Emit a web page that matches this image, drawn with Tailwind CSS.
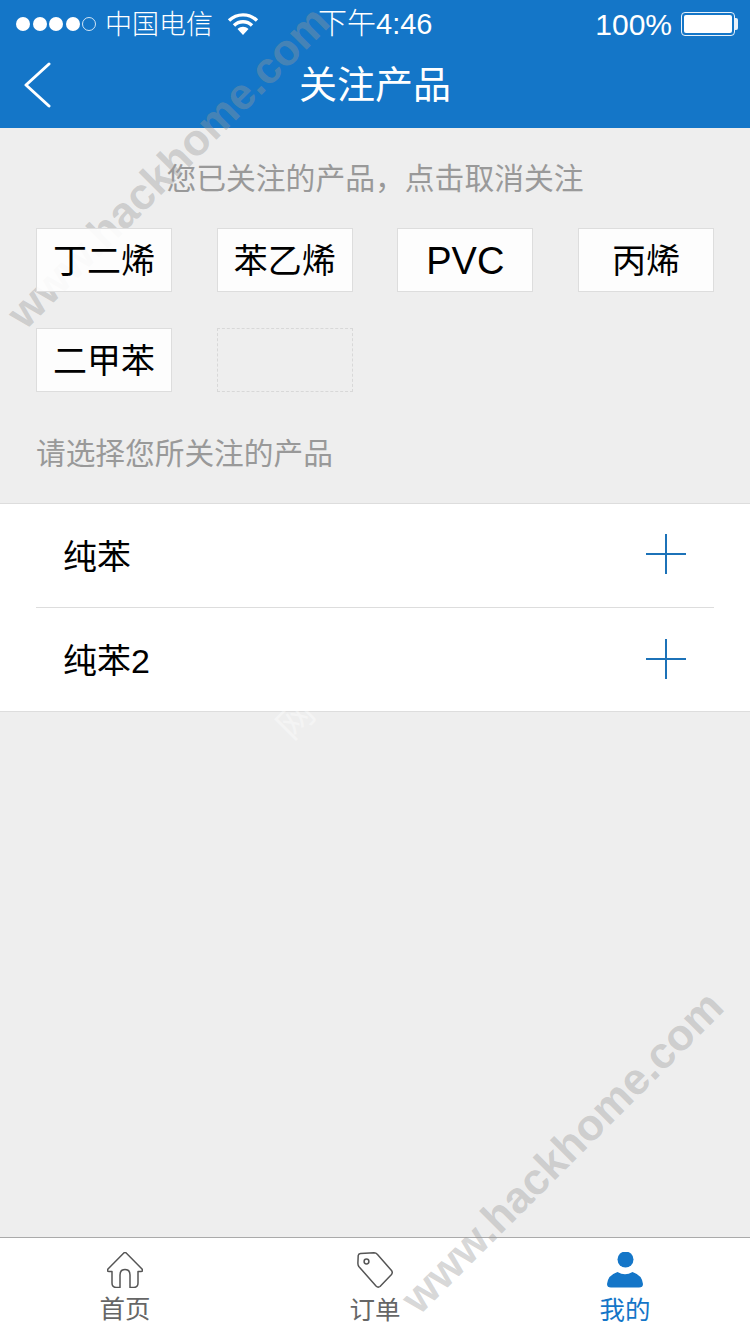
<!DOCTYPE html>
<html lang="zh-CN">
<head>
    <meta charset="UTF-8">
    <meta name="viewport" content="width=device-width, initial-scale=1.0">
    <title>关注产品</title>
    <script src="https://cdn.jsdelivr.net/npm/@tailwindcss/browser@4"></script>
</head>
<body class="bg-[#eeeeee]">
    <div class="relative w-[750px] h-[1334px] overflow-hidden flex flex-col bg-[#eeeeee] font-['Liberation_Sans','Noto_Sans_CJK_SC',sans-serif]">

        <!-- header -->
        <header class="bg-[#1476c8] text-white h-[128px] shrink-0">
            <div class="h-[48px] flex items-center pl-[16px] pr-[12px] font-light">
                <div class="flex items-center gap-[2.5px] w-[81px]">
                    <span class="w-[14px] h-[14px] rounded-full bg-white"></span>
                    <span class="w-[14px] h-[14px] rounded-full bg-white"></span>
                    <span class="w-[14px] h-[14px] rounded-full bg-white"></span>
                    <span class="w-[14px] h-[14px] rounded-full bg-white"></span>
                    <span class="w-[14px] h-[14px] rounded-full border border-white/80"></span>
                </div>
                <span class="ml-[8px] pt-[2px] text-[27px] whitespace-nowrap">中国电信</span>
                <svg class="ml-[14px]" width="32" height="24" viewBox="0 0 32 24" fill="none" stroke="#fff" stroke-width="3.4">
                    <path d="M2 8.5 C10 1 22 1 30 8.5"/>
                    <path d="M7 13.5 C12 8.5 20 8.5 25 13.5"/>
                    <path d="M10.5 17 L16 23 L21.5 17 C18 14 14 14 10.5 17 Z" fill="#fff" stroke="none"/>
                </svg>
                <span class="ml-[59px] pt-[2px] text-[29px] whitespace-nowrap">下午4:46</span>
                <span class="ml-auto text-[30px] whitespace-nowrap">100%</span>
                <div class="ml-[9px] flex items-center">
                    <div class="w-[54px] h-[24px] rounded-[4px] border border-white/90 p-[2px]">
                        <div class="w-full h-full bg-white rounded-[2px]"></div>
                    </div>
                    <div class="w-[3px] h-[12px] bg-white/90 rounded-r-[2px]"></div>
                </div>
            </div>
            <div class="relative h-[80px] flex items-center justify-center pb-[7px]">
                <svg class="absolute left-[23px] top-[14px]" width="28" height="46" viewBox="0 0 28 46" fill="none" stroke="#fff" stroke-width="3" stroke-linecap="round" stroke-linejoin="round">
                    <path d="M26 2 L3 23 L26 44"/>
                </svg>
                <h1 class="text-[38px] leading-none font-normal">关注产品</h1>
            </div>
        </header>

        <!-- followed products -->
        <section class="relative z-10 shrink-0 h-[375px] px-[36px]">
            <p class="h-[100px] pt-[34px] text-center text-[29.8px] leading-[34px] text-[#999999]">您已关注的产品，点击取消关注</p>
            <div class="grid grid-cols-[repeat(4,136px)] justify-between gap-y-[36px]">
                <div class="h-[64px] pt-[2px] flex items-center justify-center bg-white/90 border border-[#dddddd] text-[34px] text-black">丁二烯</div>
                <div class="h-[64px] pt-[2px] flex items-center justify-center bg-white/90 border border-[#dddddd] text-[34px] text-black">苯乙烯</div>
                <div class="h-[64px] pt-[2px] flex items-center justify-center bg-white/90 border border-[#dddddd] text-[38px] text-black">PVC</div>
                <div class="h-[64px] pt-[2px] flex items-center justify-center bg-white/90 border border-[#dddddd] text-[34px] text-black">丙烯</div>
                <div class="h-[64px] pt-[2px] flex items-center justify-center bg-white/90 border border-[#dddddd] text-[34px] text-black">二甲苯</div>
                <div class="h-[64px] border border-dashed border-[#d8d8d8]"></div>
            </div>
            <p class="mt-[45px] text-[29.7px] leading-[34px] text-[#999999]">请选择您所关注的产品</p>
        </section>

        <!-- product list -->
        <section class="relative z-10 shrink-0 h-[209px] bg-white border-y border-[#dddddd] text-[34px] text-black">
            <div class="h-[104px] mx-[36px] pl-[27px] pr-[28px] flex items-center justify-between border-b border-[#dddddd]">
                <span class="pt-[4px]">纯苯</span>
                <svg class="mb-[4px]" width="40" height="40" viewBox="0 0 40 40" stroke="#1c72b8" stroke-width="2"><path d="M20 0V40M0 20H40"/></svg>
            </div>
            <div class="h-[103px] mx-[36px] pl-[27px] pr-[28px] flex items-center justify-between">
                <span class="pt-[4px]">纯苯2</span>
                <svg class="mb-[2px]" width="40" height="40" viewBox="0 0 40 40" stroke="#1c72b8" stroke-width="2"><path d="M20 0V40M0 20H40"/></svg>
            </div>
        </section>

        <div class="flex-1"></div>

        <!-- tab bar -->
        <nav class="relative shrink-0 h-[97px] bg-white border-t border-[#aaaaaa] grid grid-cols-3 text-[25.5px] leading-[30px] text-[#666666]">
            <a class="flex flex-col items-center pt-[14px]">
                <svg width="36" height="36" viewBox="0 0 36 36" fill="none" stroke="#555" stroke-width="1.5" stroke-linejoin="round">
                    <path d="M16.8 1 Q18 -0.2 19.2 1 L35 17 Q36.5 19.5 34 19.5 H31 V31 Q31 35.5 26.5 35.5 H23 V23 Q23 17.5 18 17.5 Q13 17.5 13 23 V35.5 H9.5 Q5 35.5 5 31 V19.5 H2 Q-0.5 19.5 1 17 Z"/>
                </svg>
                <span class="mt-[6px]">首页</span>
            </a>
            <a class="flex flex-col items-center pt-[14px]">
                <svg width="36" height="36" viewBox="0 0 36 36" fill="none" stroke="#555" stroke-width="1.5" stroke-linejoin="round">
                    <path d="M3.5 1.4 L17 0.8 Q19 0.8 20.5 2.5 L34.5 18.5 Q36 20.5 34.5 22.5 L23 34.5 Q21 36 19 34 L1.8 14.5 Q0.8 13 0.9 11 L1.2 3.5 Q1.5 1.6 3.5 1.4 Z"/>
                    <circle cx="9.5" cy="9.5" r="2.4"/>
                </svg>
                <span class="mt-[7px]">订单</span>
            </a>
            <a class="flex flex-col items-center pt-[14px] text-[#1476c8]">
                <svg width="36" height="36" viewBox="0 0 36 36" fill="#1476c8">
                    <circle cx="18.5" cy="7.5" r="8"/>
                    <path d="M0 32 Q1 23 10.5 20 Q18 24.5 25.5 20 Q35 23 36 32 Q36 35.5 32 35.5 H4 Q0 35.5 0 32 Z"/>
                </svg>
                <span class="mt-[7px]">我的</span>
            </a>
        </nav>

        <!-- watermarks -->
        <span class="absolute z-[5] left-[-62px] top-[145px] w-[460px] text-center -rotate-45 text-[44px] leading-[44px] font-bold whitespace-nowrap text-[#999999]/40 pointer-events-none">www.hackhome.com</span>
        <span class="absolute z-[5] left-[332px] top-[1130px] w-[460px] text-center -rotate-45 text-[44px] leading-[44px] font-bold whitespace-nowrap text-[#999999]/40 pointer-events-none">www.hackhome.com</span>
        <span class="absolute z-20 left-[278px] top-[702px] -rotate-45 text-[36px] leading-[36px] text-white/40 pointer-events-none">网</span>
    </div>
</body>
</html>
